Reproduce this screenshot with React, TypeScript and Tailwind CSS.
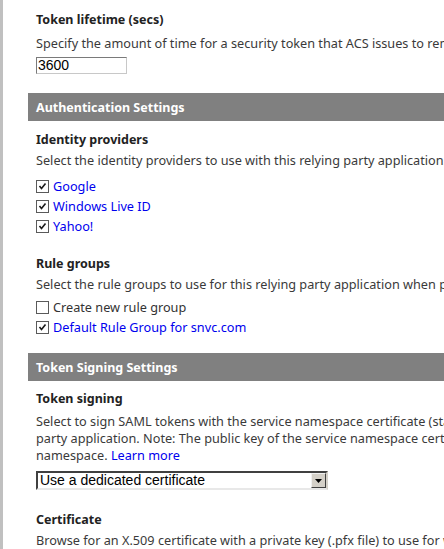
import React from "react";

const font = { fontFamily: '"Noto Sans", "Open Sans", sans-serif' };
const arial = { fontFamily: '"Liberation Sans", Arial, sans-serif' };

function Check({ checked }: { checked: boolean }) {
  return (
    <span className="flex h-[13px] w-[13px] shrink-0 items-center justify-center border border-[#5a5a5a] bg-white">
      {checked && (
        <svg width="9" height="9" viewBox="0 0 9 9">
          <path d="M1.5 4 L3.5 6.5 L7.5 1.5" fill="none" stroke="#1a1a1a" strokeWidth="1.6" />
        </svg>
      )}
    </span>
  );
}

function Option({ label, checked, link }: { label: string; checked: boolean; link?: boolean }) {
  return (
    <label className="flex h-[20px] items-center gap-[4px]">
      <Check checked={checked} />
      <span className={link ? "text-[#0000ee]" : "text-[#333]"}>{label}</span>
    </label>
  );
}

function Bar({ title }: { title: string }) {
  return (
    <div className="flex h-[28px] items-center bg-[#808080] pl-2 text-[12.5px] font-bold text-white">
      {title}
    </div>
  );
}

function Heading({ children }: { children: React.ReactNode }) {
  return <h3 className="text-[12.5px] font-bold leading-[20px] text-[#222]">{children}</h3>;
}

export default function App() {
  return (
    <div
      className="flex h-[549px] w-[444px] overflow-hidden bg-white text-[12.7px] leading-[17px] text-[#3a3a3a]"
      style={font}
    >
      <div className="w-[3px] shrink-0 bg-[#c0c0c0]" />
      <main className="ml-[25px] w-[720px] shrink-0 whitespace-nowrap">
        <section className="px-2 pt-[10px]">
          <Heading>Token lifetime (secs)</Heading>
          <p className="mt-[5px]">
            Specify the amount of time for a security token that ACS issues to remain valid.
          </p>
          <div
            className="mt-[5px] flex h-[17px] w-[91px] items-center border border-t-[#7a7a7a] border-l-[#7a7a7a] border-r-[#c8c8c8] border-b-[#c8c8c8] px-[1px] text-[14px] text-black"
            style={arial}
          >
            3600
          </div>
        </section>

        <div className="mt-[19px]">
          <Bar title="Authentication Settings" />
        </div>

        <section className="px-2 pt-[9px]">
          <Heading>Identity providers</Heading>
          <p className="mt-[2px]">
            Select the identity providers to use with this relying party application.
          </p>
          <div className="mt-[7px]">
            <Option label="Google" checked link />
            <Option label="Windows Live ID" checked link />
            <Option label="Yahoo!" checked link />
          </div>

          <div className="mt-[18px]">
            <Heading>Rule groups</Heading>
          </div>
          <p className="mt-[2px]">
            Select the rule groups to use for this relying party application when processing tokens.
          </p>
          <div className="mt-[4px]">
            <Option label="Create new rule group" checked={false} />
            <Option label="Default Rule Group for snvc.com" checked link />
          </div>
        </section>

        <div className="mt-[16px]">
          <Bar title="Token Signing Settings" />
        </div>

        <section className="px-2 pt-[8px]">
          <Heading>Token signing</Heading>
          <div className="mt-[4px]">
            <p>Select to sign SAML tokens with the service namespace certificate (standard) or a dedicated certificate for this relying</p>
            <p>party application. Note: The public key of the service namespace certificate is available in the metadata of your</p>
            <p>
              namespace. <span className="text-[#0000ee]">Learn more</span>
            </p>
          </div>
          <div className="mt-[7px] flex h-[19px] w-[292px] border-2 border-t-[#404040] border-l-[#404040] border-r-[#d4d0c8] border-b-[#e8e8e8] bg-white">
            <span className="flex flex-1 items-center pl-[2px] text-[14px] text-black" style={arial}>
              Use a dedicated certificate
            </span>
            <span className="flex w-[15px] items-center justify-center border border-t-[#f0f0f0] border-l-[#f0f0f0] border-r-[#404040] border-b-[#404040] bg-[#d4d0c8]">
              <svg width="7" height="4" viewBox="0 0 7 4">
                <path d="M0 0 H7 L3.5 4 Z" fill="#000" />
              </svg>
            </span>
          </div>

          <div className="mt-[20px]">
            <Heading>Certificate</Heading>
          </div>
          <p className="mt-[2px]">
            Browse for an X.509 certificate with a private key (.pfx file) to use for when signing tokens.
          </p>
        </section>
      </main>
    </div>
  );
}
